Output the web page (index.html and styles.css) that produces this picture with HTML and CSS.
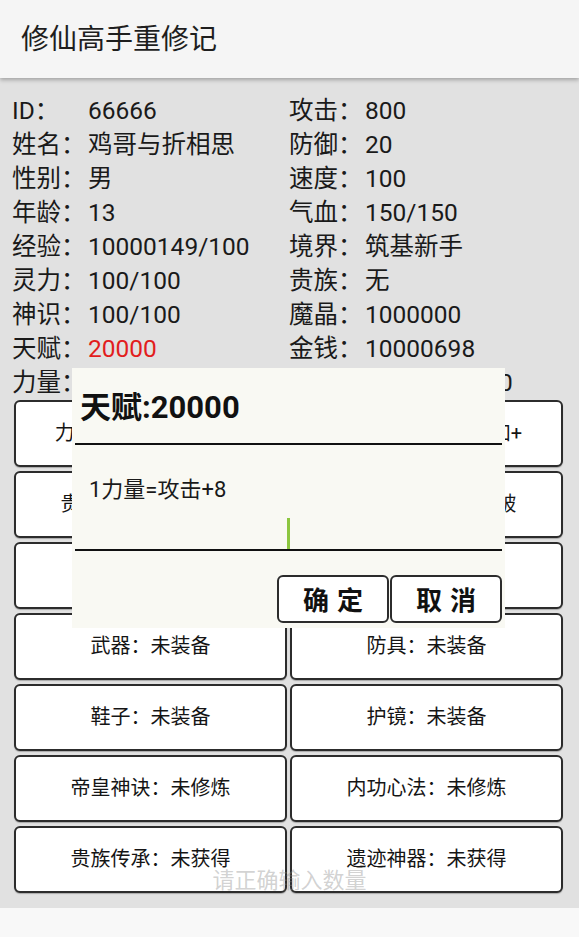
FILE: index.html
```html
<!DOCTYPE html>
<html lang="zh-CN">
<head>
  <meta charset="UTF-8">
  <meta name="viewport" content="width=device-width, initial-scale=1">
  <title>修仙高手重修记</title>
  <link rel="stylesheet" href="styles.css">
</head>
<body>
  <!-- 标题栏 -->
  <header class="app-bar">修仙高手重修记</header>

  <main class="content">
    <!-- 角色属性 -->
    <div class="stats">
      <div class="stat"><span class="stat-key">ID：</span><span>66666</span></div>
      <div class="stat"><span class="stat-key">攻击：</span><span>800</span></div>
      <div class="stat"><span class="stat-key">姓名：</span><span>鸡哥与折相思</span></div>
      <div class="stat"><span class="stat-key">防御：</span><span>20</span></div>
      <div class="stat"><span class="stat-key">性别：</span><span>男</span></div>
      <div class="stat"><span class="stat-key">速度：</span><span>100</span></div>
      <div class="stat"><span class="stat-key">年龄：</span><span>13</span></div>
      <div class="stat"><span class="stat-key">气血：</span><span>150/150</span></div>
      <div class="stat"><span class="stat-key">经验：</span><span>10000149/100</span></div>
      <div class="stat"><span class="stat-key">境界：</span><span>筑基新手</span></div>
      <div class="stat"><span class="stat-key">灵力：</span><span>100/100</span></div>
      <div class="stat"><span class="stat-key">贵族：</span><span>无</span></div>
      <div class="stat"><span class="stat-key">神识：</span><span>100/100</span></div>
      <div class="stat"><span class="stat-key">魔晶：</span><span>1000000</span></div>
      <div class="stat"><span class="stat-key">天赋：</span><span class="talent">20000</span></div>
      <div class="stat"><span class="stat-key">金钱：</span><span>10000698</span></div>
      <div class="stat"><span class="stat-key">力量：</span><span>0</span></div>
      <div class="stat"><span class="stat-key">法力：</span><span>10000/10000</span></div>
    </div>

    <!-- 功能按钮 -->
    <div class="actions">
      <button class="action">力量属性点：点击加+</button>
      <button class="action">敏捷属性点：点击加+</button>
      <button class="action">贵族爵位：点击突破</button>
      <button class="action">修为境界：点击突破</button>
      <button class="action">宠物：未拥有</button>
      <button class="action">坐骑：未拥有</button>
      <button class="action">武器：未装备</button>
      <button class="action">防具：未装备</button>
      <button class="action">鞋子：未装备</button>
      <button class="action">护镜：未装备</button>
      <button class="action">帝皇神诀：未修炼</button>
      <button class="action">内功心法：未修炼</button>
      <button class="action">贵族传承：未获得</button>
      <button class="action">遗迹神器：未获得</button>
    </div>
  </main>

  <footer class="nav-bar"></footer>

  <!-- 加点对话框 -->
  <div class="dialog">
    <div class="dialog-title">天赋:20000</div>
    <div class="dialog-msg">1力量=攻击+8</div>
    <div class="dialog-input"><span class="caret"></span></div>
    <div class="dialog-buttons">
      <button class="dialog-btn">确定</button>
      <button class="dialog-btn">取消</button>
    </div>
  </div>

  <div class="toast">请正确输入数量</div>
</body>
</html>
```

FILE: styles.css
```css
/* 基本样式 */
body {
  margin: 0;
  width: 579px;
  height: 937px;
  position: relative;
  overflow: hidden;
  font-family: "Roboto", "Noto Sans CJK SC", sans-serif;
  color: #1a1a1a;
  background: #f8f8f8;
}

button {
  font-family: inherit;
  cursor: pointer;
}

/* 标题栏 */
.app-bar {
  height: 78px;
  box-sizing: border-box;
  padding: 22px 0 0 21px;
  font-size: 28px;
  line-height: 36px;
  color: #1e1e1e;
  background: #f5f5f5;
  box-shadow: 0 2px 4px rgba(0, 0, 0, 0.28);
  position: relative;
  z-index: 2;
}

/* 内容区 */
.content {
  height: 830px;
  box-sizing: border-box;
  padding: 16px 16px 0 12px;
  background: #e1e1e1;
}

.stats {
  display: grid;
  grid-template-columns: 277px 1fr;
  font-size: 24.5px;
  line-height: 34px;
}

.stat {
  display: flex;
  white-space: nowrap;
}

.stat-key {
  width: 76px;
  flex: none;
}

.talent {
  color: #e21d1d;
}

/* 按钮网格 */
.actions {
  display: grid;
  grid-template-columns: 273px 273px;
  grid-auto-rows: 67px;
  column-gap: 3px;
  row-gap: 4px;
  margin: 0 0 0 2px;
}

.action {
  margin: 0;
  padding: 0 0 5px;
  border: 2px solid #2c2c2c;
  border-radius: 6px;
  background: #fff;
  font-size: 20px;
  color: #151515;
  box-shadow: 0 1px 1px rgba(0, 0, 0, 0.25);
}

.nav-bar {
  height: 29px;
  background: #f8f8f8;
}

/* 对话框 */
.dialog {
  position: absolute;
  left: 72px;
  top: 368px;
  width: 433px;
  height: 260px;
  box-sizing: border-box;
  padding: 0 3px;
  background: #f9f9f3;
  z-index: 5;
}

.dialog-title {
  height: 77px;
  box-sizing: border-box;
  padding: 20px 0 0 5px;
  font-size: 31px;
  font-weight: bold;
  line-height: 40px;
  color: #111;
  border-bottom: 2px solid #111;
}

.dialog-msg {
  padding: 31px 0 0 14px;
  font-size: 22px;
  line-height: 28px;
}

.dialog-input {
  height: 45px;
  border-bottom: 2px solid #111;
  display: flex;
  justify-content: center;
  align-items: flex-end;
}

.caret {
  width: 3px;
  height: 31px;
  background: #8cc63f;
}

.dialog-buttons {
  display: flex;
  justify-content: flex-end;
  gap: 1px;
  margin-top: 24px;
}

.dialog-btn {
  width: 112px;
  height: 48px;
  margin: 0;
  padding: 0 0 2px;
  border: 2px solid #2c2c2c;
  border-radius: 6px;
  background: #fff;
  font-size: 26px;
  font-weight: bold;
  letter-spacing: 8px;
  text-indent: 8px;
  color: #111;
}

/* 提示 */
.toast {
  position: absolute;
  left: 0;
  right: 0;
  top: 862px;
  text-align: center;
  font-size: 22px;
  color: rgba(140, 140, 140, 0.4);
  z-index: 6;
}
```
